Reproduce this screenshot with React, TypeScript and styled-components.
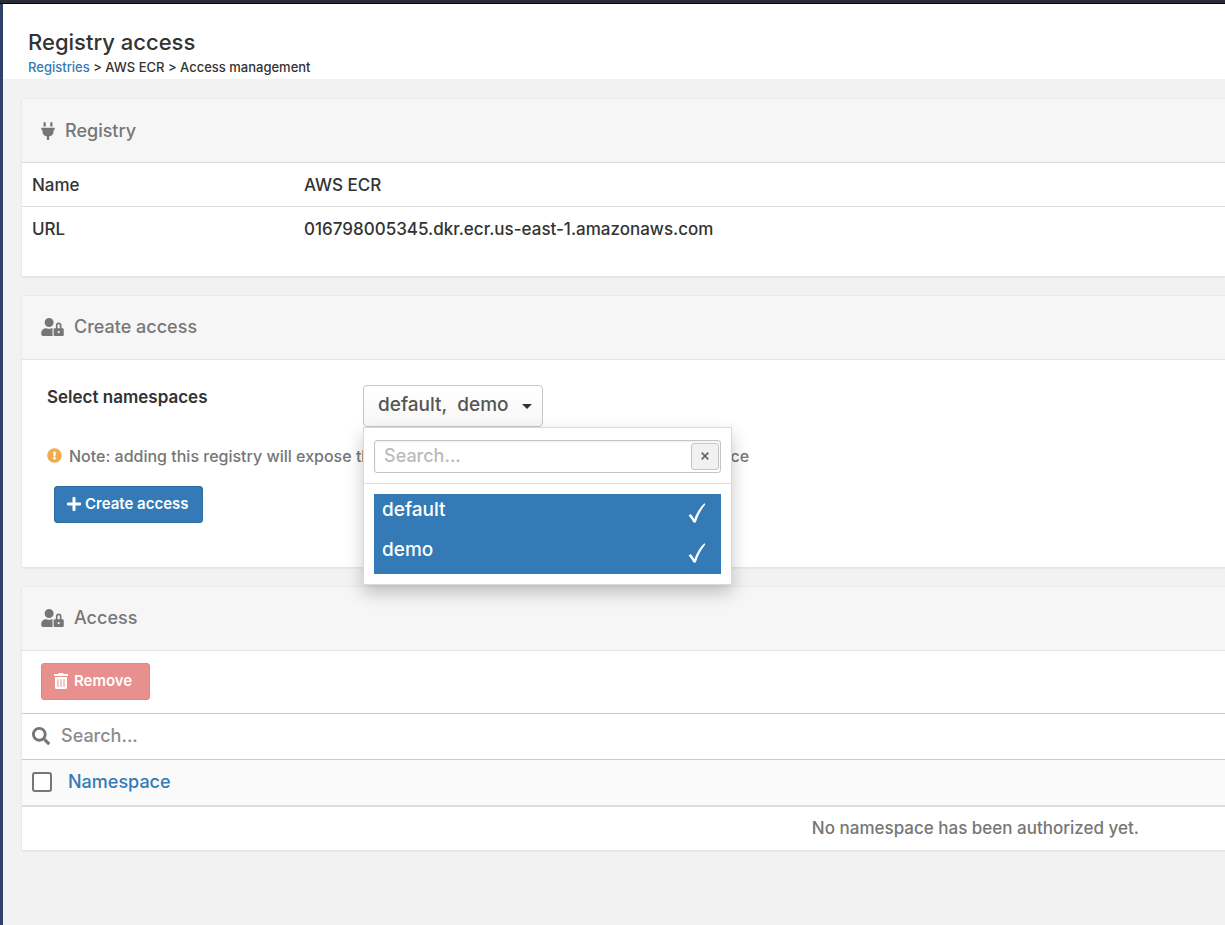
import React, { useState } from "react";
import styled, { createGlobalStyle } from "styled-components";
import {
  FaExclamationCircle,
  FaPlug,
  FaPlus,
  FaSearch,
  FaTrashAlt,
  FaUserLock,
} from "react-icons/fa";

const GlobalStyle = createGlobalStyle`
  *, *::before, *::after { box-sizing: border-box; }
  body {
    margin: 0;
    background: #f2f2f2;
    color: #333;
    font-family: Inter, "Liberation Sans", sans-serif;
    font-size: 17px;
    font-weight: 500;
    line-height: 24px;
  }
  button, input { font: inherit; }
  svg { display: block; flex: none; }
`;

const Page = styled.div`
  display: flex;
  flex-direction: column;
  min-height: 100vh;
  overflow-x: hidden;
`;

const TopEdge = styled.div`
  height: 4px;
  background: #2b2b35;
  border-bottom: 1px solid #08080c;
`;

const Body = styled.div`
  display: flex;
  flex: 1;
`;

const SidebarEdge = styled.div`
  flex: none;
  width: 3px;
  background: #30426a;
`;

const Content = styled.main`
  flex: 1;
  min-width: 0;
`;

const PageHeader = styled.header`
  padding: 24px 25px 2px;
  background: #fff;
`;

const PageTitle = styled.h1`
  margin: 0;
  font-size: 22px;
  font-weight: 500;
  line-height: 29px;
`;

const Breadcrumbs = styled.nav`
  font-size: 13px;
  line-height: 20px;
`;

const Link = styled.a`
  color: #337ab7;
  text-decoration: none;
`;

const Panels = styled.div`
  display: flex;
  flex-direction: column;
  gap: 18px;
  padding: 19px 0 74px 18px;
`;

const Panel = styled.section`
  border: 1px solid #e9e9e9;
  border-right: 0;
  border-bottom-color: #e5e5e5;
  border-radius: 2px 0 0 2px;
  background: #fff;
  box-shadow: 0 1px 1px rgba(0, 0, 0, 0.04);
`;

const PanelTitle = styled.h2`
  display: flex;
  align-items: center;
  gap: 10px;
  height: 64px;
  margin: 0;
  padding: 0 19px;
  border-bottom: 1px solid #e5e5e5;
  background: #f6f6f6;
  color: #767676;
  font-size: 18px;
  font-weight: 500;
`;

const PlugIcon = styled(FaPlug)`
  width: 14px;
  height: 18px;
`;

const UserLockIcon = styled(FaUserLock)`
  width: 23px;
  height: 18px;
`;

const DetailsTable = styled.table`
  width: 100%;
  margin: -1px 0 25px;
  border-collapse: collapse;
  text-align: left;

  th, td {
    height: 44px;
    padding: 0 10px;
    border-top: 1px solid #ddd;
    font-weight: 500;
  }
  th { width: 272px; }
`;

const Form = styled.form`
  height: 207px;
  padding: 25px;
`;

const Field = styled.div`
  display: flex;
  align-items: flex-start;
`;

const FieldLabel = styled.span`
  width: 316px;
  font-weight: 600;
`;

const Picker = styled.div`
  position: relative;
`;

const PickerButton = styled.button`
  display: flex;
  align-items: center;
  justify-content: space-between;
  width: 180px;
  height: 42px;
  padding: 0 10px 2px 14px;
  border: 1px solid #c6c6c6;
  border-radius: 4px;
  background: linear-gradient(#fff, #f7f7f7);
  color: #555;
  font-size: 19px;
  white-space: pre;
`;

const Caret = styled.span`
  border: 5px solid transparent;
  border-top-color: #333;
  border-bottom: 0;
  margin-top: 4px;
`;

const Menu = styled.div`
  position: absolute;
  z-index: 2;
  top: 42px;
  left: 0;
  width: 369px;
  border: 1px solid #d9d9d9;
  background: #fff;
  box-shadow: 0 8px 16px rgba(0, 0, 0, 0.22);
`;

const MenuSearch = styled.div`
  padding: 12px 10px 10px;
  border-bottom: 1px solid #ddd;
`;

const MenuSearchBox = styled.div`
  display: flex;
  align-items: center;
  height: 33px;
  padding-right: 1px;
  border: 1px solid #c4c4c4;
  border-radius: 3px;
  box-shadow: inset 0 1px 2px rgba(0, 0, 0, 0.08);
`;

const MenuInput = styled.input`
  flex: 1;
  min-width: 0;
  padding: 0 9px;
  border: 0;
  outline: 0;
  background: none;
  color: #555;
  font-size: 18px;
  &::placeholder { color: #bbb; opacity: 1; }
`;

const ClearButton = styled.button`
  display: grid;
  place-items: center;
  width: 28px;
  height: 27px;
  padding: 0;
  border: 1px solid #c6c6c6;
  border-radius: 3px;
  background: #f1f1f1;
  color: #666;
`;

const Options = styled.div`
  padding: 10px;
`;

const Option = styled.button<{ $selected: boolean }>`
  display: flex;
  align-items: flex-start;
  justify-content: space-between;
  width: 100%;
  height: 40px;
  padding: 4px 15px 0 8px;
  border: 0;
  background: ${(p) => (p.$selected ? "#337ab7" : "#fff")};
  color: ${(p) => (p.$selected ? "#fff" : "#555")};
  font-size: 19px;

  svg { margin-top: 5px; }
`;

const Note = styled.p`
  display: flex;
  align-items: center;
  gap: 7px;
  margin: 17px 0 18px;
  color: #767676;
  font-size: 16px;
  white-space: nowrap;
`;

const NoteIcon = styled(FaExclamationCircle)`
  color: #f0ad4e;
  font-size: 15px;
`;

const ActionButton = styled.button<{ $kind: "primary" | "danger" }>`
  display: inline-flex;
  align-items: center;
  gap: ${(p) => (p.$kind === "primary" ? 4 : 6)}px;
  height: 37px;
  padding: 0 12px;
  min-width: ${(p) => (p.$kind === "primary" ? 149 : 109)}px;
  border: 1px solid ${(p) => (p.$kind === "primary" ? "#2e6da4" : "#e58481")};
  border-radius: 3px;
  background: ${(p) => (p.$kind === "primary" ? "#337ab7" : "#e8908e")};
  color: #fff;
  font-size: 15px;
  font-weight: 600;
`;

const PlusIcon = styled(FaPlus)`
  width: 14px;
  height: 16px;
`;

const TrashIcon = styled(FaTrashAlt)`
  width: 14px;
  height: 16px;
`;

const SubmitRow = styled.div`
  padding-left: 7px;
`;

const Toolbar = styled.div`
  display: flex;
  padding: 12px 19px 13px;
`;

const SearchBar = styled.label`
  display: flex;
  align-items: center;
  gap: 11px;
  height: 46px;
  padding: 0 10px;
  border-top: 1px solid #ccc;
  color: #767676;
  font-size: 18px;
`;

const SearchInput = styled.input`
  flex: 1;
  min-width: 0;
  padding: 0;
  border: 0;
  outline: 0;
  color: #555;
  &::placeholder { color: #8c8c8c; opacity: 1; }
`;

const AccessTable = styled.table`
  width: 100%;
  border-collapse: separate;
  border-spacing: 0;
  text-align: left;

  th {
    height: 48px;
    padding: 0 10px;
    border-top: 1px solid #ccc;
    border-bottom: 2px solid #ddd;
    background: #fafafa;
    font-size: 18px;
    font-weight: 500;
  }
`;

const HeadCell = styled.div`
  display: flex;
  align-items: center;
  gap: 16px;
`;

const CheckBox = styled.input`
  appearance: none;
  width: 20px;
  height: 20px;
  margin: 0;
  border: 2px solid #767676;
  border-radius: 3px;
  background: #fff;
  &:checked { background: #337ab7; }
`;

const EmptyCell = styled.td`
  height: 43px;
  padding: 0 86px 0 10px;
  color: #767676;
  text-align: right;
`;

const CheckMark = () => (
  <svg width="18" height="20" viewBox="0 0 18 20" aria-hidden="true">
    <path
      d="M0.6 12.4 L2.6 11 C4.2 12.6 5.4 14.4 6.3 16.2 C8.4 10.4 11.6 4.6 16.4 0.2 L17.4 1.2 C13.4 6.2 10 12.4 7.8 19.4 L5.4 19.4 C4 16.8 2.6 14.6 0.6 12.4 Z"
      fill="currentColor"
    />
  </svg>
);

const Cross = () => (
  <svg width="8" height="8" viewBox="0 0 8 8" aria-hidden="true">
    <path d="M0.7 0.7 L7.3 7.3 M7.3 0.7 L0.7 7.3" stroke="currentColor" strokeWidth="1.7" />
  </svg>
);

const NAMESPACES = ["default", "demo"];

export default function App() {
  const [selected, setSelected] = useState<string[]>(NAMESPACES);
  const [filter, setFilter] = useState("");

  const toggle = (name: string) =>
    setSelected((list) =>
      list.includes(name) ? list.filter((n) => n !== name) : [...list, name]
    );

  return (
    <Page>
      <GlobalStyle />
      <TopEdge />
      <Body>
        <SidebarEdge />
        <Content>
          <PageHeader>
            <PageTitle>Registry access</PageTitle>
            <Breadcrumbs aria-label="Breadcrumb">
              <Link href="#registries">Registries</Link> &gt; AWS ECR &gt; Access management
            </Breadcrumbs>
          </PageHeader>

          <Panels>
            <Panel>
              <PanelTitle>
                <PlugIcon />
                Registry
              </PanelTitle>
              <DetailsTable>
                <tbody>
                  <tr>
                    <th scope="row">Name</th>
                    <td>AWS ECR</td>
                  </tr>
                  <tr>
                    <th scope="row">URL</th>
                    <td>016798005345.dkr.ecr.us-east-1.amazonaws.com</td>
                  </tr>
                </tbody>
              </DetailsTable>
            </Panel>

            <Panel>
              <PanelTitle>
                <UserLockIcon />
                Create access
              </PanelTitle>
              <Form onSubmit={(e) => e.preventDefault()}>
                <Field>
                  <FieldLabel id="namespaces-label">Select namespaces</FieldLabel>
                  <Picker>
                    <PickerButton type="button" aria-expanded="true" aria-describedby="namespaces-label">
                      {selected.join(",  ")}
                      <Caret />
                    </PickerButton>
                    <Menu>
                      <MenuSearch>
                        <MenuSearchBox>
                          <MenuInput
                            aria-label="Filter namespaces"
                            placeholder="Search..."
                            value={filter}
                            onChange={(e) => setFilter(e.target.value)}
                          />
                          <ClearButton type="button" aria-label="Clear" onClick={() => setFilter("")}>
                            <Cross />
                          </ClearButton>
                        </MenuSearchBox>
                      </MenuSearch>
                      <Options>
                        {NAMESPACES.filter((n) => n.includes(filter)).map((name) => (
                          <Option
                            key={name}
                            type="button"
                            $selected={selected.includes(name)}
                            aria-pressed={selected.includes(name)}
                            onClick={() => toggle(name)}
                          >
                            {name}
                            {selected.includes(name) && <CheckMark />}
                          </Option>
                        ))}
                      </Options>
                    </Menu>
                  </Picker>
                </Field>
                <Note>
                  <NoteIcon />
                  Note: adding this registry will expose the registry credentials to users for this namespace
                </Note>
                <SubmitRow>
                  <ActionButton $kind="primary" type="submit">
                    <PlusIcon />
                    Create access
                  </ActionButton>
                </SubmitRow>
              </Form>
            </Panel>

            <Panel>
              <PanelTitle>
                <UserLockIcon />
                Access
              </PanelTitle>
              <Toolbar>
                <ActionButton $kind="danger" type="button">
                  <TrashIcon />
                  Remove
                </ActionButton>
              </Toolbar>
              <SearchBar>
                <FaSearch size={18} />
                <SearchInput aria-label="Search" placeholder="Search..." />
              </SearchBar>
              <AccessTable>
                <thead>
                  <tr>
                    <th scope="col">
                      <HeadCell>
                        <CheckBox type="checkbox" aria-label="Select all" />
                        <Link href="#namespace">Namespace</Link>
                      </HeadCell>
                    </th>
                  </tr>
                </thead>
                <tbody>
                  <tr>
                    <EmptyCell>No namespace has been authorized yet.</EmptyCell>
                  </tr>
                </tbody>
              </AccessTable>
            </Panel>
          </Panels>
        </Content>
      </Body>
    </Page>
  );
}
